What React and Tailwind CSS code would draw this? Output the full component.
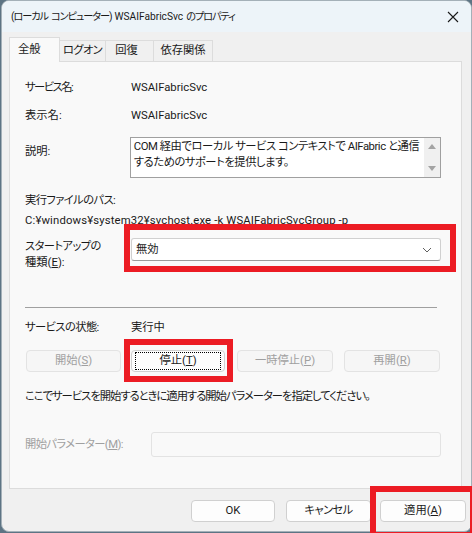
import React from "react";

const font = { fontFamily: 'Roboto, "Noto Sans CJK JP", sans-serif' };

function J({ children, className = "" }) {
  return <span className={`tracking-[-0.6px] ${className}`}>{children}</span>;
}

function Btn({ children, disabled, focused, className = "" }) {
  return (
    <div
      className={`flex h-[22px] items-center justify-center whitespace-nowrap rounded-[4px] border ${
        disabled
          ? "border-[#e3e3e3] bg-[#f6f6f6] text-[#a0a0a0]"
          : "border-[#d0d0d0] bg-[#fdfdfd] text-[#1a1a1a]"
      } ${className}`}
    >
      {focused ? (
        <div className="flex h-[18px] w-[calc(100%-6px)] items-center justify-center border border-dotted border-black">
          {children}
        </div>
      ) : (
        children
      )}
    </div>
  );
}

function Tab({ children, active, className = "" }) {
  return active ? (
    <div className={`relative z-10 -mb-px flex h-[25px] items-center whitespace-nowrap border border-b-0 border-[#dcdcdc] bg-[#f9f9f9] pl-[8px] ${className}`}>
      {children}
    </div>
  ) : (
    <div className={`flex h-[21px] items-center whitespace-nowrap border border-b-0 border-l-0 border-[#dcdcdc] bg-[#f0f0f0] ${className}`}>
      {children}
    </div>
  );
}

export default function App() {
  return (
    <div
      className="relative h-[533px] w-[472px] overflow-hidden bg-[#5d7484] text-[11.3px] leading-[16px] text-[#1a1a1a] [font-feature-settings:'palt']"
      style={font}
    >
      <div className="ml-px flex h-[532px] w-[471px] flex-col overflow-hidden rounded-[8px] border border-[#a4b0b8] bg-[#f0f0f0]">
        {/* title bar */}
        <div className="flex h-[31px] shrink-0 items-center justify-between bg-[#edf4f9] pl-[9px] pr-[10px]">
          <span className="flex items-center gap-[3px] whitespace-nowrap text-[10.2px]">
            <J className="tracking-[-1.1px]">(ローカル</J>
            <J className="tracking-[-1.1px]">コンピューター)</J>
            <span>WSAIFabricSvc</span>
            <J className="tracking-[-1.1px]">のプロパティ</J>
          </span>
          <svg width="12" height="12" viewBox="0 0 12 12" className="mr-[2px]">
            <path d="M1 1L11 11M11 1L1 11" stroke="#1a1a1a" strokeWidth="1.1" fill="none" />
          </svg>
        </div>

        {/* tabs */}
        <div className="ml-[7px] mt-[5px] flex items-end">
          <Tab active className="w-[51px]">全般</Tab>
          <Tab className="w-[46px] justify-center"><J>ログオン</J></Tab>
          <Tab className="w-[48px] justify-center pr-[6px]">回復</Tab>
          <Tab className="w-[59px] justify-center">依存関係</Tab>
        </div>

        {/* panel */}
        <div className="ml-[7px] flex h-[428px] w-[453px] flex-col border border-[#dcdcdc] bg-[#f9f9f9] pl-[15px] pr-[20px]">
          <div className="mt-[16px] flex h-[20px] items-center">
            <span className="w-[106px]"><J className="tracking-[-1.5px]">サービス名</J>:</span>
            <span>WSAIFabricSvc</span>
          </div>
          <div className="mt-[8px] flex h-[20px] items-center">
            <span className="w-[106px]">表示名:</span>
            <span>WSAIFabricSvc</span>
          </div>
          <div className="mt-[11px] flex">
            <span className="mt-[7px] w-[105px]">説明:</span>
            <div className="flex h-[41px] w-[312px] border border-[#a0a0a0] bg-white">
              <div className="flex-1 pl-[3px] pt-[1px] leading-[16px] tracking-[-0.45px]">
                COM 経由でローカル サービス コンテキストで AIFabric と通信するためのサポートを提供します。
              </div>
              <div className="flex w-[16px] flex-col items-center justify-between bg-[#f0f0f0] py-[6px]">
                <svg width="8" height="5" viewBox="0 0 8 5">
                  <path d="M0 5L4 0L8 5Z" fill="#a3a3a3" />
                </svg>
                <svg width="8" height="5" viewBox="0 0 8 5">
                  <path d="M0 0L8 0L4 5Z" fill="#a3a3a3" />
                </svg>
              </div>
            </div>
          </div>
          <div className="mt-[13px] flex h-[20px] items-center"><J className="tracking-[-0.3px]">実行ファイルのパス:</J></div>
          <div className="flex h-[19px] items-center whitespace-nowrap tracking-[0.15px]">C:¥windows¥system32¥svchost.exe -k WSAIFabricSvcGroup -p</div>
          <div className="mt-[8px] flex">
            <div className="mt-[1px] w-[106px] leading-[16px]">
              <J>スタートアップの</J>
              <br />
              種類(<u>E</u>):
            </div>
            <div className="flex h-[23px] w-[310px] items-center justify-between rounded-[3px] border border-[#d0d0d0] border-b-[#9a9a9a] bg-white pl-[4px] pr-[8px]">
              <span>無効</span>
              <svg width="10" height="6" viewBox="0 0 10 6">
                <path d="M1 1L5 5L9 1" stroke="#606060" strokeWidth="1" fill="none" />
              </svg>
            </div>
          </div>
          <div className="mt-[36px] h-px w-[412px] bg-[#a0a0a0]" />
          <div className="mt-[10px] flex h-[20px] items-center">
            <J className="w-[106px]">サービスの状態:</J>
            <span>実行中</span>
          </div>
          <div className="mt-[12px] flex">
            <Btn disabled className="ml-px w-[95px]">
              開始(<u>S</u>)
            </Btn>
            <Btn focused className="ml-[10px] w-[94px]">
              停止(<u>T</u>)
            </Btn>
            <Btn disabled className="ml-[12px] w-[96px]">
              一時停止(<u>P</u>)
            </Btn>
            <Btn disabled className="ml-[11px] w-[96px]">
              再開(<u>R</u>)
            </Btn>
          </div>
          <div className="mt-[15px] flex h-[20px] items-center whitespace-nowrap">
            <J className="tracking-[-1px]">ここでサービスを開始するときに適用する開始パラメーターを指定してください。</J>
          </div>
          <div className="mt-[25px] flex items-center">
            <J className="w-[126px] whitespace-nowrap text-[#a0a0a0]">
              開始パラメーター(<u>M</u>):
            </J>
            <div className="h-[25px] w-[291px] rounded-[3px] border border-[#e3e3e3] bg-[#f9f9f9]" />
          </div>
        </div>

        {/* bottom buttons */}
        <div className="mt-[11px] flex">
          <Btn className="ml-[189px] w-[84px]">OK</Btn>
          <Btn className="ml-[11px] w-[85px]"><J>キャンセル</J></Btn>
          <Btn className="ml-[9px] w-[86px]">
            適用(<u>A</u>)
          </Btn>
        </div>
      </div>

      {/* red highlight annotations */}
      <div className="absolute left-[124px] top-[224px] h-[48px] w-[332px] border-[6px] border-[#ec1c24]" />
      <div className="absolute left-[124px] top-[339px] h-[43px] w-[109px] border-[6px] border-[#ec1c24]" />
      <div className="absolute left-[370px] top-[486px] h-[52px] w-[106px] border-[6px] border-[#ec1c24]" />
    </div>
  );
}
